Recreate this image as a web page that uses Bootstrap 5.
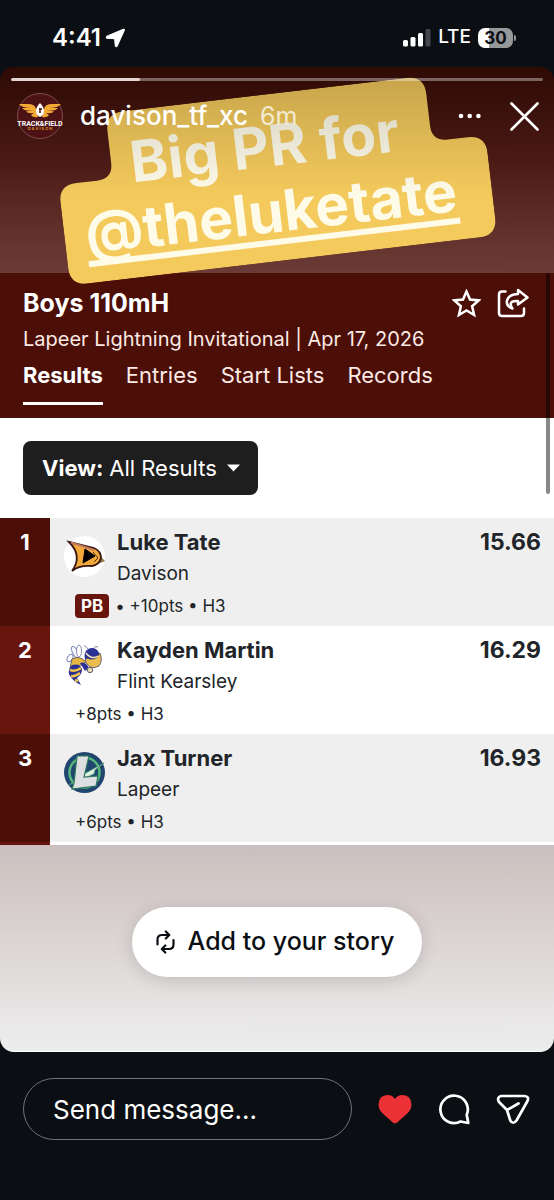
<!DOCTYPE html>
<html lang="en">
<head>
<meta charset="utf-8">
<meta name="viewport" content="width=device-width, initial-scale=1">
<title>davison_tf_xc story</title>
<link href="https://cdn.jsdelivr.net/npm/bootstrap@5.3.0/dist/css/bootstrap.min.css" rel="stylesheet">
<style>
  body { font-family: Inter, "Liberation Sans", sans-serif; background: #0b0f13; color: #fff; }
  svg { display: block; flex: none; }
  .status { height: 67px; padding: 8px 38px 0 52px; }
  .clock { font-size: 24px; font-weight: 600; }
  .network { font-size: 19px; font-weight: 500; margin: 0 7px 0 7px; }
  .charge { width: 35px; height: 20px; border-radius: 7px; background: linear-gradient(90deg, #fff 30%, #96989a 30%); color: #0b0f13; font-size: 17px; font-weight: 700; line-height: 20px; }
  .charge-tip { width: 2px; height: 6px; margin-left: 1px; border-radius: 0 2px 2px 0; background: #96989a; }

  .story { border-radius: 14px; overflow: hidden; }
  .story-top { height: 206px; background: linear-gradient(#3b0d05, #4e1b16 45%, #6b3c37); padding: 11px 11px 0; }
  .story-progress { height: 3px; border-radius: 2px; background: #ffffff5c; }
  .story-progress .progress-bar { background: #e3d4d2; border-radius: 2px; }
  .over { z-index: 3; }
  .profile { padding: 12px 0 0 6px; }
  .handle { font-size: 26px; font-weight: 500; color: #fff; line-height: 30px; margin-left: 17px; }
  .age { font-size: 25px; color: #f4ead0; line-height: 30px; margin-left: 12px; }
  .plain { background: none; border: 0; padding: 0; color: inherit; }

  .sticker { left: calc(50% - 218px); top: 27px; width: 430px; height: 167px; transform: rotate(-6.7deg); z-index: 2; }
  .sticker-text { top: 0; left: 0; width: 100%; font-weight: 700; color: #fffbe9; }
  .sticker-one { font-size: 57px; line-height: 62px; padding: 21px 0 0 74px; }
  .sticker-two { font-size: 57px; line-height: 54px; margin: 8px 0 0 21px; border-bottom: 6px solid #fffbe9; color: inherit; text-decoration: none; }
  .shade { z-index: 2; height: 130px; background: linear-gradient(#00000033, #00000000); pointer-events: none; }

  .meet { background: #4b0f08; padding: 14px 25px 13px 23px; }
  .meet h1 { font-size: 25px; font-weight: 700; line-height: 32px; margin: 0; }
  .meet-sub { font-size: 20px; line-height: 40px; color: #fbe9e4; }
  .tabs { gap: 23px; font-size: 22px; line-height: 32px; }
  .tabs a { color: #fbe9e4; text-decoration: none; padding-bottom: 11px; border-bottom: 3px solid transparent; }
  .tabs a.active { color: #fff; font-weight: 700; border-color: #fff; }
  .scroll-thumb { right: 4px; top: 206px; width: 4px; height: 221px; border-radius: 2px; background: #00000078; z-index: 2; }

  .filter { padding: 23px; }
  .view-box { background: #1e1e1e; border-radius: 8px; height: 54px; padding: 0 18px 0 19px; gap: 6px; font-size: 22px; }
  .view-box select { appearance: none; background: none; border: 0; color: #fff; padding: 0; font: inherit; outline-offset: 4px; }
  .view-box svg { margin-left: 4px; pointer-events: none; }

  .results { width: 100%; color: #212529; border-collapse: collapse; background: #fff; }
  .results tr { height: 108px; vertical-align: top; }
  .results tr:nth-child(odd) { background: #efefef; }
  .results th { width: 50px; padding: 8px 0 0; text-align: center; color: #fff; font-size: 22px; font-weight: 700; line-height: 32px; background: #68150d; }
  .results tr:nth-child(odd) th { background: #4b0f08; }
  .results td { padding: 8px 0 0 14px; }
  .results td.time { padding-right: 13px; text-align: right; font-size: 23px; }
  .athlete { font-size: 22px; }
  .athlete, .time { font-weight: 700; line-height: 32px; }
  .school { font-size: 19px; line-height: 32px; }
  .detail { font-size: 17px; line-height: 24px; margin: 4px 0 0 11px; }
  .pb { background: #68150d; color: #fff; font-weight: 700; border-radius: 4px; padding: 0 6px; margin-right: 6px; }
  .crest { margin: 10px 12px 0 0; }
  .next-row { height: 3px; background: linear-gradient(90deg, #68150d 50px, #fff 50px); }

  .story-end { background: linear-gradient(#cabfbe, #d2c6c5 16%, #e0dddc 63%, #eeedee); border-bottom: 1px solid #fff; }
  .add-btn { background: #fff; color: #0b0f13; border-radius: 35px; height: 70px; padding: 0 27px 0 23px; gap: 13px; font-size: 25px; font-weight: 500; box-shadow: 0 3px 18px #00000026; margin-top: 62px; }
  .add-btn:hover { background: #fff; }

  .reply { padding: 26px 24px 60px 23px; }
  .reply input { background: transparent; border: 1px solid #6f7276; border-radius: 31px; height: 62px; color: #fff; font-size: 26px; padding: 0 29px; }
  .reply input::placeholder { color: #fff; opacity: 1; }
  .reply-icons { gap: 26px; margin-left: 26px; }
</style>
</head>
<body class="min-vh-100 d-flex flex-column">

<header class="status d-flex align-items-center justify-content-between">
  <div class="d-flex align-items-center gap-1">
    <span class="clock">4:41</span>
    <svg width="21" height="20" viewBox="0 0 21 20" fill="#fff" stroke="#fff" stroke-width="1.500" stroke-linejoin="round"><path d="M18.500 1.500 2 8.500Q1 9.500 2 10L9.800 10.500 10.500 17.800Q11 19 12 18L19.200 2Q19.300 1.300 18.500 1.500Z"/></svg>
  </div>
  <div class="d-flex align-items-center">
    <svg width="28" height="19" viewBox="0 0 28 19" fill="#fff"><rect y="12" width="5" height="6.500" rx="1.500"/><rect x="7.500" y="9" width="5" height="9.500" rx="1.500"/><rect x="15" y="5" width="5" height="13.500" rx="1.500"/><rect x="22.500" y="1" width="5" height="17.500" rx="1.500" fill="#43464a"/></svg>
    <span class="network">LTE</span>
    <span class="charge text-center">30</span><span class="charge-tip"></span>
  </div>
</header>

<main class="story position-relative flex-grow-1 d-flex flex-column">
  <section class="story-top">
    <div class="progress story-progress position-relative over" role="progressbar" aria-label="Story progress" aria-valuenow="24" aria-valuemin="0" aria-valuemax="100"><div class="progress-bar" style="width:24.300%"></div></div>
    <div class="profile d-flex align-items-center position-relative over">
      <svg width="46" height="46" viewBox="0 0 46 46">
        <circle cx="23" cy="23" r="22.500" fill="#4c1216" stroke="#7d4f4b" stroke-width="1"/>
        <g fill="#f3aa35"><path id="wing" d="M2 11H11Q18 11 19 16L21 24Q16 25 14 22L17 20Q11 21 9 18.500L15 17.500Q7 18 5 15L14 15Q5 15 2 11Z"/><use href="#wing" transform="matrix(-1 0 0 1 46 0)"/></g>
        <path d="M23 10Q27 14 27 18T23 24Q19 22 19 18T23 10Z" fill="#fff"/><path d="M22 16H25M23 15V20" stroke="#4c1216" stroke-width="1.500"/>
        <text x="23" y="32.500" text-anchor="middle" font-family="Roboto, sans-serif" font-size="7" font-weight="700" fill="#fff">TRACK&amp;FIELD</text>
        <text x="23" y="37" text-anchor="middle" font-size="4" font-weight="600" fill="#e29a31">D A V I S O N</text>
      </svg>
      <a href="#" class="handle text-decoration-none">davison_tf_xc</a>
      <span class="age">6m</span>
      <div class="d-flex align-items-center ms-auto gap-4 pe-1">
        <button class="plain me-1" aria-label="More"><svg width="24" height="8" viewBox="0 0 24 8" fill="#fff"><circle cx="3" cy="4" r="2.300"/><circle cx="11.700" cy="4" r="2.300"/><circle cx="20.400" cy="4" r="2.300"/></svg></button>
        <button class="plain" aria-label="Close"><svg width="29" height="29" viewBox="0 0 29 29" stroke="#fff" stroke-width="2.600" stroke-linecap="round"><path d="M1.500 1.500 27.500 27.500M27.500 1.500 1.500 27.500"/></svg></button>
      </div>
    </div>
  </section>

  <div class="sticker position-absolute">
    <svg width="430" height="167" viewBox="0 0 430 167"><path fill="#f4ca5c" d="M73 0H358Q376 0 376 18V50Q376 66 392 66H412Q430 66 430 84V149Q430 167 412 167H18Q0 167 0 149V84Q0 66 18 66H39Q55 66 55 50V18Q55 0 73 0Z"/></svg>
    <div class="sticker-text position-absolute text-nowrap">
      <div class="sticker-one">Big PR for</div>
      <a href="#" class="sticker-two d-inline-block">@theluketate</a>
    </div>
  </div>
  <div class="shade position-absolute top-0 start-0 end-0"></div>
  <div class="scroll-thumb position-absolute"></div>

  <section class="meet">
    <div class="d-flex justify-content-between align-items-center">
      <h1>Boys 110mH</h1>
      <div class="d-flex align-items-center gap-3">
        <button class="plain" aria-label="Favorite"><svg width="29" height="29" viewBox="0 0 29 29" fill="none" stroke="#fff" stroke-width="2.500"><path d="M14.500 2.500 18 10.600 26.700 11.400 20.100 17.300 22.100 26 14.500 21.500 6.900 26 8.900 17.300 2.300 11.400 11 10.600Z"/></svg></button>
        <button class="plain" aria-label="Share"><svg width="32" height="30" viewBox="0 0 32 30" fill="none" stroke="#fff" stroke-width="2.500" stroke-linecap="round" stroke-linejoin="round"><path d="M8.500 3.500H5Q2 3.500 2 6.500V25Q2 28 5 28H24Q27 28 27 25V20.500"/><path d="M21 2 30.500 9.500 21 16.500V13Q14.500 12.500 13.700 15.500 13.400 18 15.500 20.500 9.500 18.500 9.800 13.500 11 6.500 21 6Z"/></svg></button>
      </div>
    </div>
    <div class="meet-sub">Lapeer Lightning Invitational | Apr 17, 2026</div>
    <nav class="tabs d-flex"><a href="#" class="active">Results</a><a href="#">Entries</a><a href="#">Start Lists</a><a href="#">Records</a></nav>
  </section>

  <section class="bg-white">
    <div class="filter d-flex">
      <div class="view-box d-flex align-items-center">
        <label for="view" class="fw-bold">View:</label>
        <select id="view"><option>All Results</option></select>
        <svg width="13" height="8" viewBox="0 0 13 8" fill="#fff"><path d="M0 .5H13L6.500 7.500Z"/></svg>
      </div>
    </div>
    <table class="results">
      <tbody>
      <tr>
        <th scope="row">1</th>
        <td>
          <div class="d-flex">
            <svg class="crest" width="41" height="41" viewBox="0 0 41 41"><circle cx="20.500" cy="20.500" r="20.500" fill="#fff"/><path d="M35 19 41 25 34 28Z" fill="#8e7643"/><path d="M5 6 30 12Q37 15 37 22 35 29 28 30 15 29 8 35 19 20 5 6Z" fill="#f3a83b" stroke="#3a1713" stroke-width="1.800"/><path d="M7 6.500 30 14" stroke="#c47b5d" stroke-width="2"/><path d="M21 13 31 20 19 27Z" fill="#000" stroke="#000"/><path d="M29 16 34 22 30 26" fill="none" stroke="#593015"/></svg>
            <div><div class="athlete">Luke Tate</div><div class="school">Davison</div></div>
          </div>
          <div class="detail"><span class="pb d-inline-block">PB</span>• +10pts • H3</div>
        </td>
        <td class="time">15.66</td>
      </tr>
      <tr>
        <th scope="row">2</th>
        <td>
          <div class="d-flex">
            <svg class="crest" width="41" height="41" viewBox="0 0 41 41"><g fill="#fff" stroke="#7f88bd"><ellipse cx="11" cy="8" rx="2.500" ry="6" transform="rotate(-25 11 8)"/><ellipse cx="15" cy="7" rx="2.500" ry="6"/><ellipse cx="6" cy="14" rx="2.500" ry="4" transform="rotate(30 6 14)"/></g><path d="M24 5Q21 1 20 2M29 5Q31 1 34 3" fill="none" stroke="#817e9c"/><ellipse cx="28" cy="12" rx="7.500" ry="8" fill="#2b3095"/><path d="M23 14Q31 18 36 9 39 17 35 22 26 27 21 17Z" fill="#e9bd50" stroke="#4d4765" stroke-width=".8"/><path d="M22 9Q27 16 34 12" fill="none" stroke="#f4e9c0" stroke-width="1.300"/><path d="M8 15Q16 11 22 18L18 21Q10 21 6 24Z" fill="#e6b943" stroke="#524d52" stroke-width=".8"/><path d="M16 19Q21 17 25 24L21 27Z" fill="#2b3095"/><circle cx="26" cy="26" r="2.700" fill="#e5dcb5" stroke="#60606e"/><path d="M8 21Q16 19 18 25 18 31 13 34L17 41Q8 37 5 30 4 25 8 21Z" fill="#2b3095"/><path d="M6 26Q12 28 17 24M7 32Q11 33 16 29M11 36 14 37" fill="none" stroke="#efc24e" stroke-width="2.500"/></svg>
            <div><div class="athlete">Kayden Martin</div><div class="school">Flint Kearsley</div></div>
          </div>
          <div class="detail">+8pts • H3</div>
        </td>
        <td class="time">16.29</td>
      </tr>
      <tr>
        <th scope="row">3</th>
        <td>
          <div class="d-flex">
            <svg class="crest" width="41" height="41" viewBox="0 0 41 41"><circle cx="20.500" cy="20.500" r="20.500" fill="#20466f"/><circle cx="20.500" cy="20.500" r="15" fill="none" stroke="#55b879" stroke-width="2.500"/><path d="M5 33 18 23 40 11 31 18 30 22Z" fill="#dff0e2" stroke="#3d9168" stroke-width=".8"/><path d="M13 4H25L20 25 34 24 32 34 8 37 10 31Z" fill="#dedfe0" stroke="#2b765d" stroke-width="1.200"/></svg>
            <div><div class="athlete">Jax Turner</div><div class="school">Lapeer</div></div>
          </div>
          <div class="detail">+6pts • H3</div>
        </td>
        <td class="time">16.93</td>
      </tr>
      </tbody>
    </table>
    <div class="next-row"></div>
  </section>

  <section class="story-end flex-grow-1 d-flex justify-content-center align-items-start">
    <button class="btn add-btn d-flex align-items-center">
      <svg width="19" height="24" viewBox="0 0 19 24" fill="none" stroke="#0b0f13" stroke-width="2.200" stroke-linecap="round" stroke-linejoin="round"><path d="M1.500 14.500V9.500Q1.500 5 6 5H13M9.800 1.500 13.300 5 9.800 8.500M17.500 10V14.500Q17.500 19 13 19H6M9.300 15.500 5.800 19 9.300 22.500"/></svg>
      Add to your story
    </button>
  </section>
</main>

<footer class="reply d-flex align-items-center">
  <input class="flex-grow-1" type="text" placeholder="Send message..." aria-label="Send message" size="10">
  <div class="reply-icons d-flex align-items-center">
    <button class="plain" aria-label="Unlike"><svg width="34" height="30" viewBox="0 0 34 30" fill="#ed3237"><path d="M17 29.500Q15.800 29.500 14 27.800L4.500 19.200Q.5 15.500.5 10.500.8 1.200 9.500 1 14.500 1 17 5 19.500 1 24.500 1 33.200 1.200 33.500 10.500 33.500 15.500 29.500 19.200L20 27.800Q18.200 29.500 17 29.500Z"/></svg></button>
    <button class="plain" aria-label="Comment"><svg width="32" height="32" viewBox="0 0 32 32" fill="none" stroke="#fff" stroke-width="2.700" stroke-linejoin="round"><path d="M28.700 21.800A13.700 13.700 0 1 0 22.500 28.500L30.300 30Z"/></svg></button>
    <button class="plain" aria-label="Send"><svg width="34" height="31" viewBox="0 0 34 31" fill="none" stroke="#fff" stroke-width="2.700" stroke-linecap="round" stroke-linejoin="round"><path d="M5 2H28.500Q33.500 2.500 31.500 7L20.500 26.500Q17 31 14.300 26.500L11 16 3 8Q.5 3.500 5 2ZM11 16 22.500 9.500"/></svg></button>
  </div>
</footer>

<script src="https://cdn.jsdelivr.net/npm/bootstrap@5.3.0/dist/js/bootstrap.bundle.min.js"></script>
</body>
</html>
